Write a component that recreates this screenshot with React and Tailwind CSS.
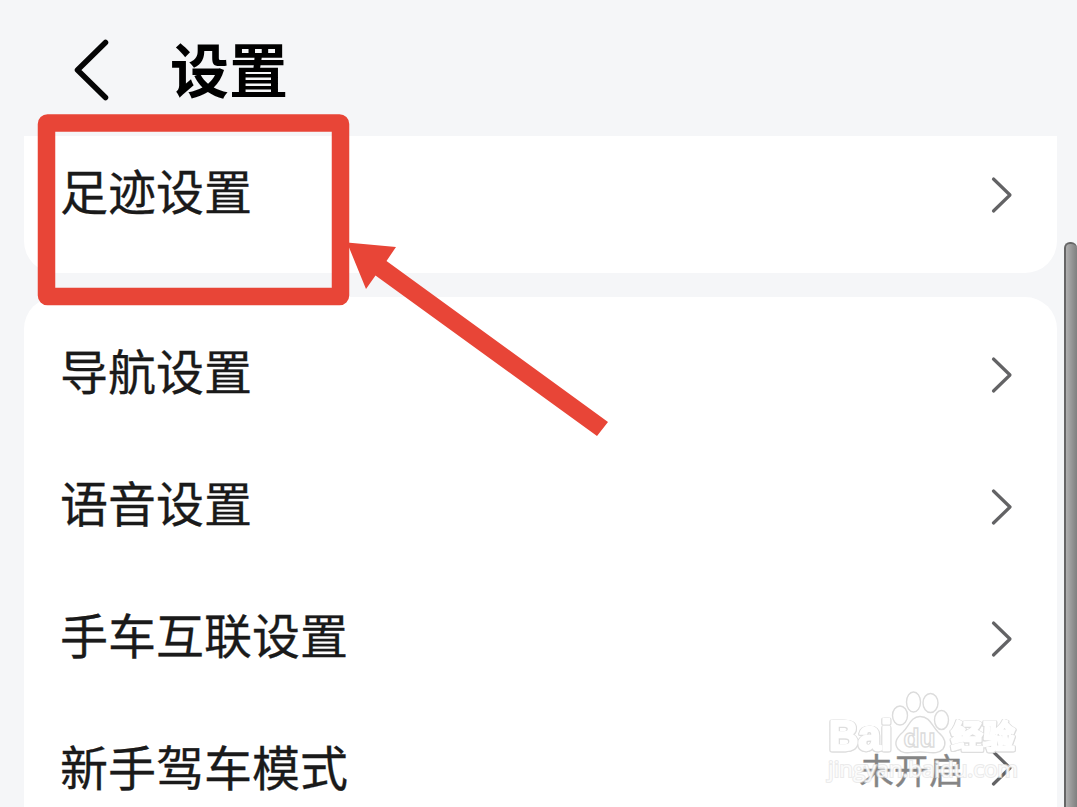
const FONT = "font-['Noto_Sans_CJK_SC','Liberation_Sans',sans-serif]";

const MAIN_ROWS = [
  { label: '导航设置' },
  { label: '语音设置' },
  { label: '手车互联设置' },
  { label: '新手驾车模式', value: '未开启' },
];

const ChevronRight = () => (
  <svg width="24" height="40" viewBox="0 0 24 40" fill="none" className="shrink-0">
    <path d="M3.5 4 L20 20 L3.5 36" stroke="#636365" strokeWidth="3.2" strokeLinecap="round" strokeLinejoin="round" />
  </svg>
);

const SettingRow = ({ label, value }) => (
  <div className="flex h-[132px] shrink-0 items-center justify-between pl-[36px] pr-[43px]">
    <span className="mb-[12px] text-[48px] leading-none text-[#1a1a1a] [-webkit-text-stroke:0.3px_#1a1a1a]">{label}</span>
    <div className={value ? 'mb-[6px] flex items-center gap-[26px]' : 'flex items-center'}>
      {value && (
        <span className="text-[35px] leading-none text-[#858585] [-webkit-text-stroke:0.4px_#858585]">{value}</span>
      )}
      <ChevronRight />
    </div>
  </div>
);

const Highlight = () => (
  <svg width="620" height="450" viewBox="0 0 620 450" className="pointer-events-none absolute left-0 top-0">
    <rect x="46.5" y="123" width="294" height="173.5" rx="1" fill="none" stroke="#e84537" strokeWidth="17.5" strokeLinejoin="round" />
    <path d="M347 242.5 L396 247 L386.5 261 L608 422 L597 436 L375.5 275.5 L366 289 Z" fill="#e84537" />
  </svg>
);

const Watermark = () => (
  <svg width="210" height="110" viewBox="820 685 210 110" className="pointer-events-none absolute left-[820px] top-[685px]">
    <g
      fill="#ffffff"
      stroke="#ffffff"
      strokeWidth="2.4"
      strokeLinejoin="round"
      fontFamily="Liberation Sans, Noto Sans CJK SC, sans-serif"
      fontWeight="bold"
      className="[filter:drop-shadow(1px_0_0_#dcdcdc)_drop-shadow(-1px_0_0_#dcdcdc)_drop-shadow(0_1px_0_#dedede)]"
    >
      <text x="829" y="750" fontSize="42" textLength="63" lengthAdjust="spacingAndGlyphs">Bai</text>
      <text x="951" y="748" fontSize="32" textLength="64" lengthAdjust="spacingAndGlyphs">经验</text>
    </g>
    <g fill="#ffffff" stroke="#dcdcdc" strokeWidth="1.4" fontFamily="Liberation Sans, sans-serif" fontWeight="bold">
      <ellipse cx="900" cy="715.5" rx="7.5" ry="9.5" />
      <ellipse cx="913.5" cy="702" rx="7" ry="10" />
      <ellipse cx="930.5" cy="703" rx="7.5" ry="9.5" />
      <ellipse cx="941.5" cy="720" rx="7" ry="9.5" />
      <path d="M920 716.5 C911 716.5 909 726 903 732 C896 738 894 744 898 749 C903 755 911 752 920 752 C929 752 938 755 943 749 C947 743 944 737 938 732 C932 726 930 716.5 920 716.5 Z" />
      <text x="903.5" y="747" fontSize="26" textLength="32" lengthAdjust="spacingAndGlyphs">du</text>
    </g>
    <text x="828" y="777" fontSize="21" fontFamily="Open Sans, sans-serif" fill="#ffffff" fillOpacity="0.85" stroke="#e2e2e2" strokeOpacity="0.7" strokeWidth="2" paintOrder="stroke" textLength="190" lengthAdjust="spacingAndGlyphs">jingyan.baidu.com</text>
  </svg>
);

const App = () => {
  return (
    <div className={`relative flex h-[807px] w-[1077px] flex-col overflow-hidden bg-[#f5f6f8] ${FONT}`}>
      <header className="flex h-[136px] shrink-0 items-start pl-[72px] pt-[37px]">
        <svg width="40" height="66" viewBox="0 0 40 66" fill="none">
          <path d="M33.5 5.5 L5.5 33 L33.5 60.5" stroke="#050505" strokeWidth="5.5" strokeLinecap="round" strokeLinejoin="round" />
        </svg>
        <h1 className="-mt-px ml-[58px] text-[59px] leading-[64px] font-bold text-black">设置</h1>
      </header>

      <main className="flex w-[1057px] min-h-0 flex-1 flex-col gap-6 pl-6">
        <section className="flex h-[137px] shrink-0 flex-col justify-end overflow-hidden rounded-b-[32px] bg-white pb-3">
          <SettingRow label="足迹设置" />
        </section>
        <section className="flex min-h-0 flex-1 flex-col rounded-t-[32px] bg-white pt-3">
          {MAIN_ROWS.map((row) => (
            <SettingRow key={row.label} label={row.label} value={row.value} />
          ))}
        </section>
      </main>

      {/* scrollbar thumb */}
      <div className="absolute left-[1064px] top-[242px] h-[580px] w-[13px] rounded-t-[6px] border-l-2 border-t-2 border-[#666666] bg-linear-to-r from-[#b0b0b0] to-[#808080]" />
      <Highlight />
      <Watermark />
    </div>
  );
};

export default App;
